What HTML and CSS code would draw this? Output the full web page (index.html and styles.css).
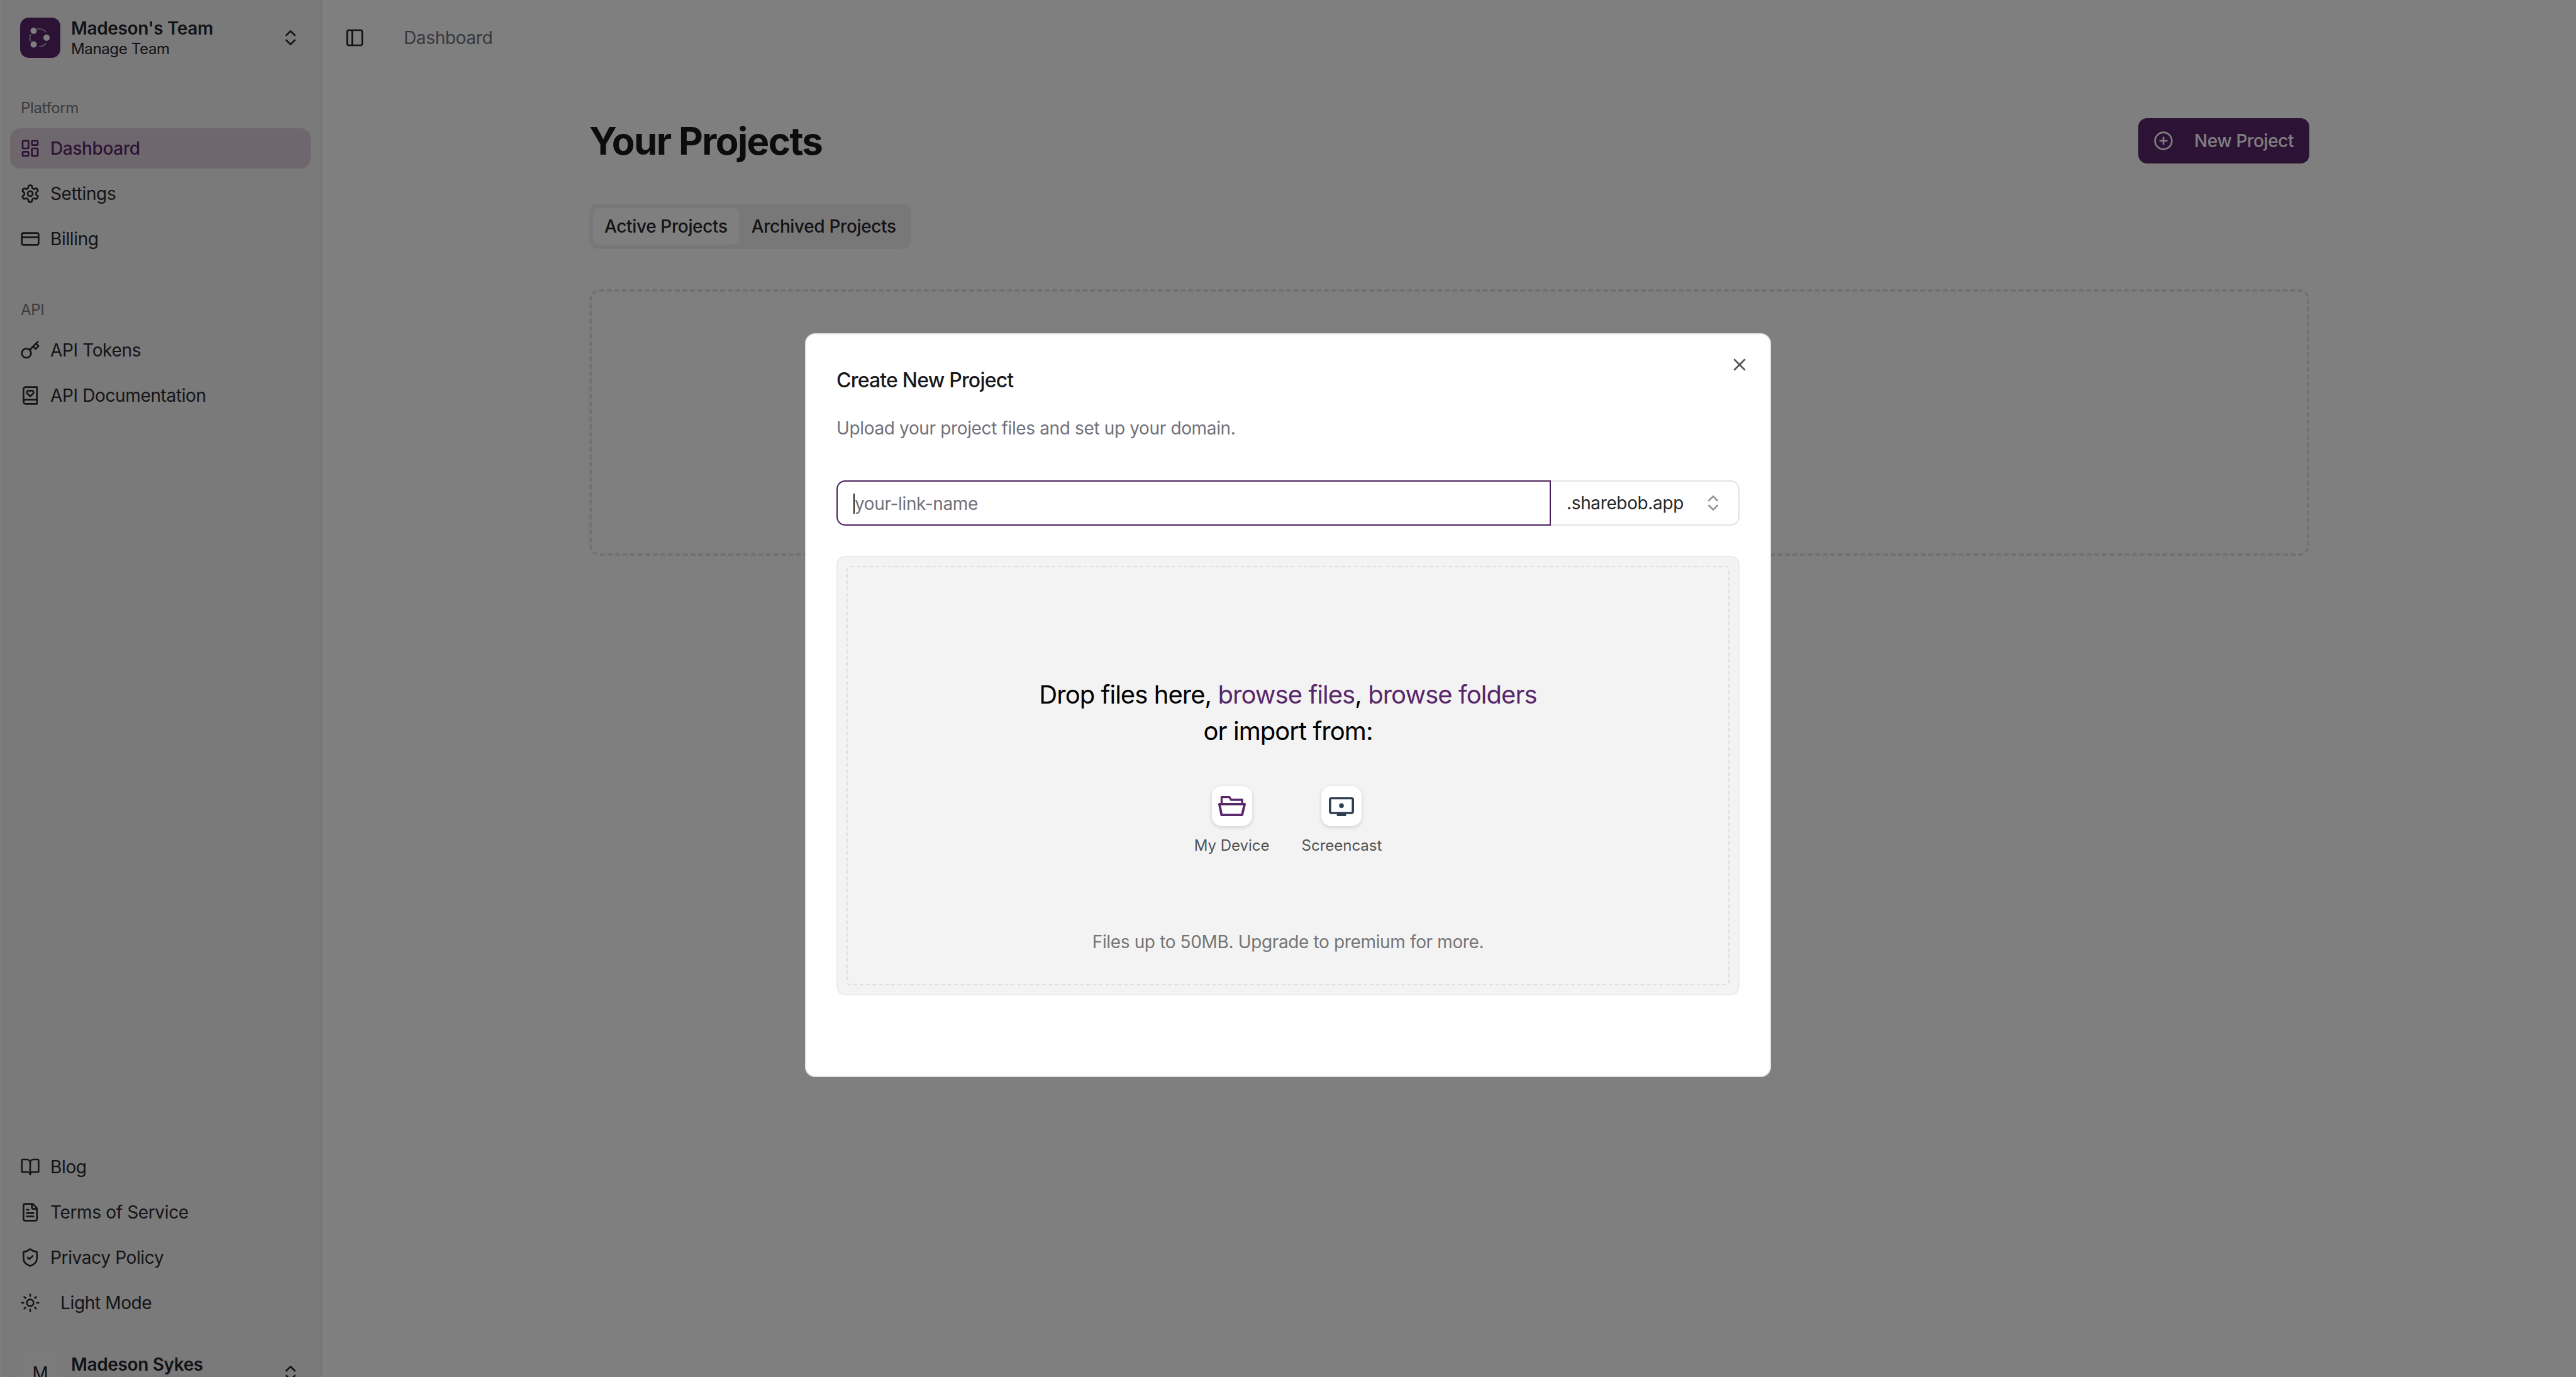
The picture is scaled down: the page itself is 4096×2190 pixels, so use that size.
FILE: index.html
```html
<!DOCTYPE html>
<html lang="en">
<head>
<meta charset="utf-8">
<title>Dashboard</title>
<link rel="stylesheet" href="styles.css">
</head>
<body>
<div class="app">
  <aside class="sidebar">
    <div class="team">
      <span class="team-logo">
        <svg viewBox="0 0 64 64" class="logo-svg"><path class="logo-arc" d="M28 18.2A14 14 0 0 1 40.5 22.4M41 41A14 14 0 0 1 31 46M16.4 27A14 14 0 0 0 16.4 37"/><circle cx="21.5" cy="21" r="5"/><circle cx="42" cy="32" r="5"/><circle cx="21.5" cy="42.7" r="5"/></svg>
      </span>
      <span class="team-text"><strong class="team-name">Madeson's Team</strong><span class="team-sub">Manage Team</span></span>
      <svg class="icon" viewBox="0 0 24 24"><path d="m7 15 5 5 5-5"/><path d="m7 9 5-5 5 5"/></svg>
    </div>

    <div class="group-label first">Platform</div>
    <nav class="nav">
      <a class="nav-item active"><svg class="icon" viewBox="0 0 24 24"><rect x="3" y="3" width="7" height="9" rx="1"/><rect x="14" y="3" width="7" height="5" rx="1"/><rect x="14" y="12" width="7" height="9" rx="1"/><rect x="3" y="16" width="7" height="5" rx="1"/></svg>Dashboard</a>
      <a class="nav-item"><svg class="icon" viewBox="0 0 24 24"><path d="M12.22 2h-.44a2 2 0 0 0-2 2v.18a2 2 0 0 1-1 1.73l-.43.25a2 2 0 0 1-2 0l-.15-.08a2 2 0 0 0-2.73.73l-.22.38a2 2 0 0 0 .73 2.73l.15.1a2 2 0 0 1 1 1.72v.51a2 2 0 0 1-1 1.74l-.15.09a2 2 0 0 0-.73 2.73l.22.38a2 2 0 0 0 2.73.73l.15-.08a2 2 0 0 1 2 0l.43.25a2 2 0 0 1 1 1.73V20a2 2 0 0 0 2 2h.44a2 2 0 0 0 2-2v-.18a2 2 0 0 1 1-1.73l.43-.25a2 2 0 0 1 2 0l.15.08a2 2 0 0 0 2.73-.73l.22-.39a2 2 0 0 0-.73-2.73l-.15-.08a2 2 0 0 1-1-1.74v-.5a2 2 0 0 1 1-1.74l.15-.09a2 2 0 0 0 .73-2.73l-.22-.38a2 2 0 0 0-2.73-.73l-.15.08a2 2 0 0 1-2 0l-.43-.25a2 2 0 0 1-1-1.73V4a2 2 0 0 0-2-2z"/><circle cx="12" cy="12" r="3"/></svg>Settings</a>
      <a class="nav-item"><svg class="icon" viewBox="0 0 24 24"><rect x="2" y="5" width="20" height="14" rx="2"/><line x1="2" y1="10" x2="22" y2="10"/></svg>Billing</a>
    </nav>

    <div class="group-label">API</div>
    <nav class="nav">
      <a class="nav-item"><svg class="icon" viewBox="0 0 24 24"><circle cx="7.5" cy="15.5" r="5.5"/><path d="m21 2-9.6 9.6"/><path d="m15.5 7.5 3 3L22 7l-3-3"/></svg>API Tokens</a>
      <a class="nav-item"><svg class="icon" viewBox="0 0 24 24"><path d="M4 19.5v-15A2.5 2.5 0 0 1 6.5 2H20v20H6.5a2.5 2.5 0 0 1 0-5H20"/><path d="M16 8.2C16 7 15 6 13.8 6c-.8 0-1.4.3-1.8.9-.4-.6-1-.9-1.8-.9C9 6 8 7 8 8.2c0 .6.3 1.2.7 1.6C10 11.1 12 13 12 13s2-1.9 3.3-3.1c.4-.4.7-1 .7-1.7z"/></svg>API Documentation</a>
    </nav>

    <nav class="nav nav-bottom">
      <a class="nav-item"><svg class="icon" viewBox="0 0 24 24"><path d="M12 7v14"/><path d="M3 18a1 1 0 0 1-1-1V4a1 1 0 0 1 1-1h5a4 4 0 0 1 4 4 4 4 0 0 1 4-4h5a1 1 0 0 1 1 1v13a1 1 0 0 1-1 1h-6a3 3 0 0 0-3 3 3 3 0 0 0-3-3z"/></svg>Blog</a>
      <a class="nav-item"><svg class="icon" viewBox="0 0 24 24"><path d="M15 2H6a2 2 0 0 0-2 2v16a2 2 0 0 0 2 2h12a2 2 0 0 0 2-2V7Z"/><path d="M14 2v4a2 2 0 0 0 2 2h4"/><path d="M10 9H8"/><path d="M16 13H8"/><path d="M16 17H8"/></svg>Terms of Service</a>
      <a class="nav-item"><svg class="icon" viewBox="0 0 24 24"><path d="M20 13c0 5-3.5 7.5-7.66 8.95a1 1 0 0 1-.67-.01C7.5 20.5 4 18 4 13V6a1 1 0 0 1 1-1c2 0 4.5-1.2 6.24-2.72a1.17 1.17 0 0 1 1.52 0C14.51 3.81 17 5 19 5a1 1 0 0 1 1 1z"/><path d="m9 12 2 2 4-4"/></svg>Privacy Policy</a>
      <a class="nav-item mode"><svg class="icon" viewBox="0 0 24 24"><circle cx="12" cy="12" r="4"/><path d="M12 2v2"/><path d="M12 20v2"/><path d="m4.93 4.93 1.41 1.41"/><path d="m17.66 17.66 1.41 1.41"/><path d="M2 12h2"/><path d="M20 12h2"/><path d="m6.34 17.66-1.41 1.41"/><path d="m19.07 4.93-1.41 1.41"/></svg>Light Mode</a>
    </nav>

    <div class="team user">
      <span class="avatar">M</span>
      <span class="team-text"><strong class="team-name">Madeson Sykes</strong></span>
      <svg class="icon" viewBox="0 0 24 24"><path d="m7 15 5 5 5-5"/><path d="m7 9 5-5 5 5"/></svg>
    </div>
  </aside>

  <main class="main">
    <header class="topbar">
      <svg class="icon" viewBox="0 0 24 24"><rect x="3" y="3" width="18" height="18" rx="2"/><path d="M9 3v18"/></svg>
      <span class="crumb">Dashboard</span>
    </header>
    <section class="content">
      <div class="head-row">
        <h1 class="title">Your Projects</h1>
        <button class="new-btn"><svg class="icon" viewBox="0 0 24 24"><circle cx="12" cy="12" r="10"/><path d="M8 12h8"/><path d="M12 8v8"/></svg>New Project</button>
      </div>
      <div class="tabs">
        <span class="tab tab-on">Active Projects</span>
        <span class="tab">Archived Projects</span>
      </div>
      <div class="empty"></div>
    </section>
  </main>
</div>

<div class="overlay">
  <div class="modal">
    <svg class="icon close" viewBox="0 0 24 24"><path d="M18 6 6 18"/><path d="m6 6 12 12"/></svg>
    <h2 class="modal-title">Create New Project</h2>
    <p class="modal-desc">Upload your project files and set up your domain.</p>
    <div class="link-row">
      <div class="link-input"><span class="placeholder">your-link-name</span></div>
      <div class="domain"><span>.sharebob.app</span><svg class="icon faint" viewBox="0 0 24 24"><path d="m7 15 5 5 5-5"/><path d="m7 9 5-5 5 5"/></svg></div>
    </div>
    <div class="drop">
      <div class="drop-inner">
        <p class="drop-text">Drop files here, <a class="link">browse files</a>, <a class="link">browse folders</a><br>or import from:</p>
        <div class="sources">
          <div class="source">
            <span class="tile"><svg class="tile-icon purple" viewBox="0 0 32 32"><path fill-rule="evenodd" d="M8.45 22.087l-1.305-6.674h17.678l-1.572 6.674H8.45zm4.975-12.412l1.083 1.765a.823.823 0 00.715.386h7.951V13.5H8.587V9.675h4.838zM26.043 13.5h-1.195v-2.598c0-.463-.336-.75-.798-.75h-8.356l-1.082-1.766A.823.823 0 0013.897 8H7.728c-.462 0-.815.256-.815.718V13.5h-.956a.97.97 0 00-.746.37.972.972 0 00-.19.81l1.724 8.565c.095.44.484.755.933.755H24c.44 0 .824-.3.929-.727l2.043-8.568a.972.972 0 00-.176-.825.967.967 0 00-.753-.38z"/></svg></span>
            <span class="source-name">My Device</span>
          </div>
          <div class="source">
            <span class="tile"><svg class="tile-icon slate" viewBox="0 0 32 32"><path d="M24.182 9H7.818C6.81 9 6 9.742 6 10.667v10c0 .916.81 1.666 1.818 1.666h4.546V24h7.272v-1.667h4.546c1 0 1.809-.75 1.809-1.666l.009-10C26 9.742 25.182 9 24.182 9zm0 11.667H7.818v-10h16.364v10z"/><circle cx="16" cy="15.67" r="1.9"/></svg></span>
            <span class="source-name">Screencast</span>
          </div>
        </div>
        <p class="drop-note">Files up to 50MB. Upgrade to premium for more.</p>
      </div>
    </div>
  </div>
</div>
</body>
</html>
```
FILE: styles.css
```css
* { box-sizing: border-box; }
html, body { margin: 0; height: 2190px; overflow: hidden; background: #fff; }
body { font-family: Inter, "Noto Sans", sans-serif; color: #27272a; font-size: 28px; line-height: 40px; letter-spacing: -0.36px; }
h1, h2, p { margin: 0; }

.icon { width: 32px; height: 32px; flex: none; fill: none; stroke: currentColor; stroke-width: 2; stroke-linecap: round; stroke-linejoin: round; }

.app { display: flex; height: 2190px; padding-left: 2px; }

.sidebar { width: 510px; flex: none; height: 2248px; background: #f4f4f6; border-right: 2px solid #e4e4e7; padding: 28px 16px 32px 14px; display: flex; flex-direction: column; }
.team { display: flex; align-items: center; padding-left: 16px; padding-right: 16px; height: 64px; flex: none; }
.team-logo { width: 64px; height: 64px; border-radius: 14px; background: #58276a; flex: none; display: flex; }
.logo-svg { width: 64px; height: 64px; fill: #fff; }
.logo-arc { fill: none; stroke: rgba(255, 255, 255, .55); stroke-width: 2; stroke-linecap: round; }
.team-text { display: flex; flex-direction: column; margin-left: 17px; flex: 1; min-width: 0; white-space: nowrap; overflow: hidden; }
.team-name { font-weight: 600; font-size: 28px; line-height: 36px; color: #27272a; }
.team-sub { font-size: 24px; line-height: 30px; color: #27272a; }
.group-label { font-size: 24px; line-height: 32px; color: #77777e; padding-left: 17px; margin: 65px 0 16px; font-weight: 400; }
.group-label.first { margin-top: 64px; }
.nav { display: flex; flex-direction: column; gap: 8px; flex: none; }
.nav-bottom { margin-top: auto; gap: 8px; }
.nav-item { display: flex; align-items: center; gap: 16px; height: 64px; padding-left: 16px; border-radius: 16px; font-size: 28px; color: #2b2b2e; }
.nav-item.active { background: #dccfdc; color: #58276a; font-weight: 500; }
.nav-item.mode { gap: 32px; }
.user { margin-top: 48px; }
.user .team-text { align-self: flex-start; }
.avatar { width: 64px; height: 64px; border-radius: 16px; background: #f6f6f8; display: flex; align-items: center; justify-content: center; flex: none; font-size: 28px; }

.main { flex: 1; min-width: 0; display: flex; flex-direction: column; }
.topbar { height: 120px; flex: none; display: flex; align-items: center; padding-left: 36px; gap: 62px; }
.crumb { font-size: 28px; color: #71717a; }
.content { width: 2735px; align-self: center; padding-top: 68px; margin-left: 1px; }
.head-row { display: flex; align-items: center; justify-content: space-between; height: 72px; }
.title { font-size: 60px; line-height: 72px; font-weight: 700; color: #18181b; letter-spacing: -1.6px; }
.new-btn { display: flex; align-items: center; gap: 33px; height: 72px; width: 272px; padding-left: 24px; border: 0; border-radius: 14px; background: #58276a; color: #fff; font: 500 28px/40px Inter, sans-serif; letter-spacing: -0.36px; }
.tabs { display: inline-flex; height: 72px; margin-top: 64px; padding: 7px 6px; gap: 2px; border-radius: 14px; background: #f1f1f2; vertical-align: top; }
.tab { display: flex; align-items: center; padding: 0 18px; height: 58px; border-radius: 12px; font-weight: 500; font-size: 28px; color: #27272a; }
.tab-on { background: #fff; }
.empty { height: 424px; margin-top: 64px; border: 4px dashed #e4e4e7; border-radius: 16px; }

.overlay { position: fixed; inset: 0; background: rgba(0, 0, 0, .5); display: flex; justify-content: center; align-items: flex-start; padding-top: 530px; }
.modal { position: relative; width: 1536px; height: 1183px; background: #fff; border: 2px solid #e4e4e7; border-radius: 16px; padding: 49px 48px 48px; }
.close { position: absolute; top: 32px; right: 32px; color: #555; }
.modal-title { font-size: 32px; line-height: 48px; font-weight: 450; color: #18181b; letter-spacing: -0.8px; }
.modal-desc { margin-top: 32px; font-size: 28px; line-height: 40px; color: #71717a; }
.link-row { display: flex; margin-top: 63px; height: 72px; }
.link-input { width: 1136px; height: 72px; flex: none; border: 2px solid #4a1f5c; border-radius: 14px 0 0 14px; display: flex; align-items: center; padding-left: 25px; padding-top: 1px; }
.placeholder { border-left: 2px solid #222; line-height: 32px; color: #71717a; font-size: 28px; }
.domain { width: 300px; flex: none; border: 2px solid #e4e4e7; border-left: 0; border-radius: 0 14px 14px 0; display: flex; align-items: center; justify-content: space-between; padding: 0 24px 0 25px; color: #27272a; }
.faint { opacity: .5; }
.drop { margin-top: 48px; width: 1436px; height: 699px; background: #f3f3f3; border: 2px solid #ebebeb; border-radius: 14px; padding: 14px; }
.drop-inner { height: 100%; border: 2px dashed #dfdfdf; border-radius: 6px; display: flex; flex-direction: column; align-items: center; padding-top: 174px; }
.drop-text { font-size: 40px; line-height: 58px; text-align: center; color: #000; letter-spacing: -0.95px; }
.link { color: #58276a; }
.sources { display: flex; gap: 51px; margin-top: 58px; height: 100px; }
.source { display: flex; flex-direction: column; align-items: center; gap: 14px; }
.tile { width: 64px; height: 64px; border-radius: 16px; background: #fff; box-shadow: 0 2px 6px rgba(0, 0, 0, .15); display: flex; flex: none; }
.tile-icon { width: 64px; height: 64px; }
.purple { fill: #58276a; }
.slate { fill: #2c3e50; }
.source-name { font-size: 24px; line-height: 34px; color: #525252; white-space: nowrap; letter-spacing: 0; }
.drop-note { margin-top: 128px; font-size: 28px; line-height: 40px; color: #757575; }
```
